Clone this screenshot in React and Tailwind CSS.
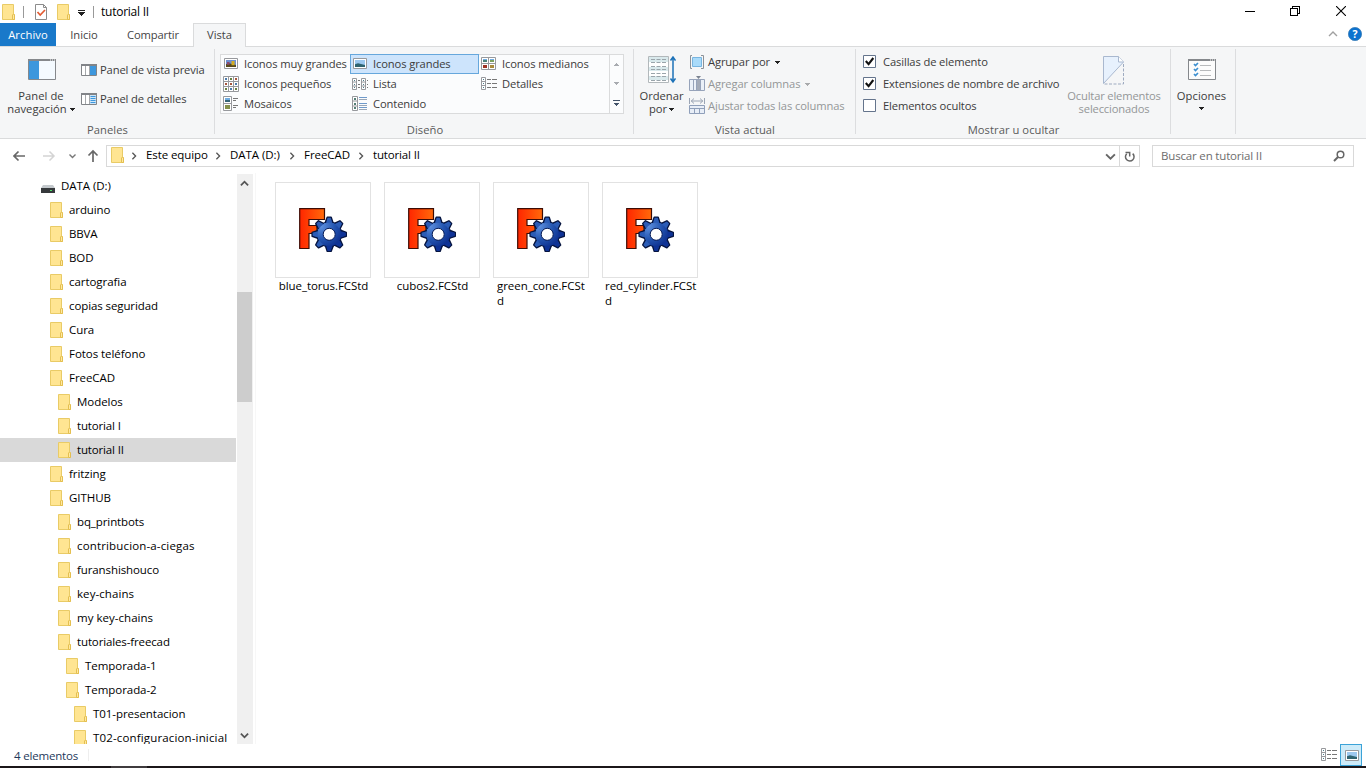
import React from "react";

function Folder({ className = "" }) {
  return (
    <svg width="14" height="16" viewBox="0 0 14 16" className={"shrink-0 " + className}>
      <path d="M.5.5h11v10h1v5H.5z" fill="#ffe592" stroke="#e9cb66" />
      <path d="M10.500 15.500v-4.500l1-1 1 1v4.500z" fill="#ffe9a2" stroke="#e4bf50" />
    </svg>
  );
}

function Caret({ color = "#222", className = "" }) {
  return (
    <svg width="5" height="3" viewBox="0 0 5 3" className={"inline-block shrink-0 " + className} shapeRendering="crispEdges">
      <path d="M0 0h5v1H4v1H3v1H2V2H1V1H0z" fill={color} />
    </svg>
  );
}

function Chevron({ dir = "right", size = 6, color = "#555", width = 1.4, className = "" }) {
  const d = {
    right: "M3 1l4 4-4 4",
    down: "M1 3l4 4 4-4",
    up: "M1 7l4-4 4 4",
  }[dir];
  return (
    <svg width={size} height={size} viewBox="0 0 10 10" className={"shrink-0 " + className}>
      <path d={d} fill="none" stroke={color} strokeWidth={(width * 10) / size} />
    </svg>
  );
}

function PaneIcon({ lines }) {
  return (
    <svg width="16" height="12" viewBox="0 0 16 12" className="-mt-px shrink-0">
      <path d="M.5.5h15v11H.5z" fill="#fff" stroke="#818488" />
      <path d="M0 0h16v2H0z" fill="#818488" />
      <path d="M4.500 2v9M8.500 2v9" stroke="#a5a8ab" />
      <path d="M9 2h6v9H9z" fill={lines ? "#cfe6f8" : "#3d97dd"} />
      {lines && <path d="M9.500 3.500h5M9.500 5.500h5M9.500 7.500h5M9.500 9.500h5" stroke="#3d97dd" />}
    </svg>
  );
}

function Photo({ x, y, w, h, colorful }) {
  return (
    <g>
      <rect x={x} y={y} width={w} height={h} fill={colorful ? "#6d8fd0" : "#9cc8ef"} />
      <path d={`M${x} ${y + h}V${y + h * 0.6}l${w * 0.3}-1 ${w * 0.7} ${h * 0.25}V${y + h}z`} fill={colorful ? "#57491b" : "#2f6470"} />
      {colorful && <rect x={x + w * 0.55} y={y + 1} width={w * 0.3} height={h * 0.6} fill="#d3ad22" />}
      {colorful && <rect x={x + w * 0.1} y={y + 2} width={w * 0.25} height={h * 0.4} fill="#8b4a6c" />}
    </g>
  );
}

function ViewIcon({ type }) {
  const g = "#97999d";
  let body = null;
  if (type === "xl" || type === "large")
    body = (
      <>
        <path d="M1.500 2.500h13v10h-13z" fill="#fff" stroke={g} />
        <Photo x={3} y={4} w={10} h={7} colorful={type === "xl"} />
      </>
    );
  if (type === "medium")
    body = (
      <>
        <path d="M.5 1.500h14v12H.5zM7.500 1.500v12M.5 7.500h14" fill="#fff" stroke={g} />
        <path d="M2 3h4v1H2zM9 3h4v1H9z" fill="#70ace0" />
        <path d="M2 4h4v2H2z" fill="#487f78" />
        <path d="M9 4h4v2H9z" fill="#7da05c" />
        <path d="M2 9h4v3H2z" fill="#9d3325" />
        <path d="M9 9h4v3H9z" fill="#a98a3c" />
      </>
    );
  if (type === "small")
    body = (
      <>
        <path d="M.5.5h15v15H.5zM5.500.5v15M10.500.5v15M.5 5.500h15M.5 10.500h15" fill="#fff" stroke={g} />
        <path d="M2 2h2v2H2zM7 12h2v2H7zM12 7h2v2h-2z" fill="#4c7bab" />
        <path d="M7 2h2v2H7zM2 12h2v2H2zM12 12h2v2h-2z" fill="#688042" />
        <path d="M12 2h2v2h-2zM2 7h2v2H2zM7 7h2v2H7z" fill="#a6553c" />
      </>
    );
  if (type === "list")
    body = (
      <>
        <path d="M.5 2.500h4v11h-4zM.5 6h4M.5 10h4M9.500 2.500h4v11h-4zM9.500 6h4M9.500 10h4" fill="#fff" stroke={g} />
        <path d="M2 4h1v1H2zM2 8h1v1H2zM2 11h1v1H2zM11 4h1v1h-1zM11 8h1v1h-1zM11 11h1v1h-1z" fill="#4e7d8c" />
        <path d="M6 4.500h2M6 8.500h2M6 11.500h2M15 4.500h1M15 8.500h1M15 11.500h1" stroke="#777" />
      </>
    );
  if (type === "details")
    body = (
      <>
        <path d="M.5 1.500h4v12h-4zM.5 5.500h4M.5 9.500h4" fill="#fff" stroke={g} />
        <path d="M2 3h1v1H2zM2 7h1v1H2zM2 11h1v1H2z" fill="#4e7d8c" />
        <path d="M6 3.500h4M11 3.500h5M6 7.500h4M11 7.500h5M6 11.500h4M11 11.500h5" stroke="#777" />
      </>
    );
  if (type === "tiles")
    body = (
      <>
        <path d="M.5.5h8v14h-8zM.5 7.500h8" fill="#fff" stroke={g} />
        <path d="M2 2h5v2H2z" fill="#70ace0" />
        <path d="M2 4h5v2H2z" fill="#376679" />
        <path d="M2 9h5v4H2z" fill="#84904a" />
        <path d="M10 2.500h5M10 4.500h3M10 9.500h5M10 11.500h3" stroke="#777" />
      </>
    );
  if (type === "content")
    body = (
      <>
        <path d="M.5.5h5v14h-5zM.5 5h5M.5 10h5" fill="#fff" stroke={g} />
        <path d="M2 2h2v2H2zM2 7h2v2H2zM2 11h2v2H2z" fill="#557f76" />
        <path d="M7 1.500h8M7 7.500h8M7 11.500h8" stroke="#6f9acb" />
        <path d="M7 3.500h8M7 9.500h8M7 13.500h8" stroke="#9ba7b6" />
      </>
    );
  return (
    <svg width="16" height="16" viewBox="0 0 16 16" className="shrink-0">
      {body}
    </svg>
  );
}

function Group({ label, className, children }) {
  return (
    <section className={"flex h-[85px] shrink-0 flex-col border-r border-[#dcdddf] " + className}>
      <div className="flex h-[73px] w-full shrink-0">{children}</div>
      <div className="-mb-[8px] shrink-0 pl-px text-center leading-[16px] tracking-[0.05px] whitespace-nowrap text-[#5a5a5a]">{label}</div>
    </section>
  );
}

function CheckRow({ checked, children }) {
  return (
    <div className="flex h-[22px] items-center">
      <svg width="13" height="13" viewBox="0 0 13 13" className="-mt-px mr-[7px] shrink-0">
        <path d="M.5.5h12v12H.5z" fill="#fff" stroke="#64748c" />
        {checked && <path d="M2.800 6l2.800 3.200L10.300 3" fill="none" stroke="#111" strokeWidth="2.100" />}
      </svg>
      <span className="whitespace-nowrap">{children}</span>
    </div>
  );
}

function FreeCad({ id }) {
  const teeth = [0, 45, 90, 135, 180, 225, 270, 315];
  return (
    <svg width="50" height="46" viewBox="0 0 50 46">
      <defs>
        <linearGradient id={"f" + id} x1="0" x2="1">
          <stop offset="0" stopColor="#ff2600" />
          <stop offset="1" stopColor="#ff6a0a" />
        </linearGradient>
        <radialGradient id={"g" + id} gradientUnits="userSpaceOnUse" cx="23" cy="19" r="27">
          <stop offset="0" stopColor="#5f91df" />
          <stop offset=".5" stopColor="#2455b0" />
          <stop offset="1" stopColor="#062384" />
        </radialGradient>
      </defs>
      <path d="M1.700 1.700H26.500V12.500H11V18.500H19V26.500H11V41.500H1.700z" fill={"url(#f" + id + ")"} stroke="#3c0c05" strokeWidth="1.200" />
      <g>
        {teeth.map((a) => (
          <path key={a} d="M27.200 16L29.300 10.300h3.800L35 16z" transform={`rotate(${a} 31.2 27.3)`} fill="#1b469f" stroke="#06143f" strokeWidth="1.600" strokeLinejoin="round" />
        ))}
        <circle cx="31.2" cy="27.3" r="12.5" fill={"url(#g" + id + ")"} stroke="#06143f" strokeWidth="1" />
        {teeth.map((a) => (
          <path key={a} d="M27.800 17L29.700 10.700h3L34.600 17z" transform={`rotate(${a} 31.2 27.3)`} fill={a > 45 && a < 225 ? "#0e3296" : "#2b5cb6"} />
        ))}
        <circle cx="31.2" cy="27.3" r="11.5" fill={"url(#g" + id + ")"} />
        <circle cx="31.2" cy="27.3" r="6" fill="#fff" stroke="#071b55" strokeWidth="1" />
      </g>
    </svg>
  );
}

const tree = [
  ["arduino", "pl-[50px]", "tracking-[-0.1px]"],
  ["BBVA", "pl-[50px]", "tracking-[-0.15px]"],
  ["BOD", "pl-[50px]", "tracking-[-0.1px]"],
  ["cartografia", "pl-[50px]", ""],
  ["copias seguridad", "pl-[50px]", "tracking-[-0.1px]"],
  ["Cura", "pl-[50px]", ""],
  ["Fotos teléfono", "pl-[50px]", ""],
  ["FreeCAD", "pl-[50px]", ""],
  ["Modelos", "pl-[58px]", ""],
  ["tutorial I", "pl-[58px]", "tracking-[-0.15px]"],
  ["tutorial II", "pl-[58px]", "tracking-[-0.15px]"],
  ["fritzing", "pl-[50px]", ""],
  ["GITHUB", "pl-[50px]", ""],
  ["bq_printbots", "pl-[58px]", "tracking-[-0.1px]"],
  ["contribucion-a-ciegas", "pl-[58px]", "tracking-[0.15px]"],
  ["furanshishouco", "pl-[58px]", "tracking-[-0.1px]"],
  ["key-chains", "pl-[58px]", "tracking-[0.07px]"],
  ["my key-chains", "pl-[58px]", "tracking-[0.03px]"],
  ["tutoriales-freecad", "pl-[58px]", "tracking-[-0.13px]"],
  ["Temporada-1", "pl-[66px]", ""],
  ["Temporada-2", "pl-[66px]", ""],
  ["T01-presentacion", "pl-[74px]", ""],
  ["T02-configuracion-inicial", "pl-[74px]", "tracking-[0.15px]"],
];

const views = [
  ["xl", "Iconos muy grandes"],
  ["large", "Iconos grandes"],
  ["medium", "Iconos medianos"],
  ["small", "Iconos pequeños"],
  ["list", "Lista"],
  ["details", "Detalles"],
  ["tiles", "Mosaicos"],
  ["content", "Contenido"],
];

const files = [
  ["blue_torus.FCStd"],
  ["cubos2.FCStd"],
  ["green_cone.FCSt", "d"],
  ["red_cylinder.FCSt", "d"],
];

function TitleBar() {
  return (
    <header className="flex h-[23px] items-center bg-white">
      <Folder className="ml-[2px]" />
      <span className="ml-[7px] h-3 w-px bg-[#999]" />
      <svg width="12" height="16" viewBox="0 0 12 16" className="ml-[11px]">
        <path d="M.5.5h8l3 3v12H.5z" fill="#fff" stroke="#8c8c8c" />
        <path d="M8.500.5v3h3" fill="none" stroke="#8c8c8c" />
        <path d="M2.500 8l2.700 3L10 6" fill="none" stroke="#e35b32" strokeWidth="1.700" />
      </svg>
      <Folder className="ml-[10px]" />
      <svg width="7" height="6" viewBox="0 0 7 6" className="mt-[3px] ml-[7px]" shapeRendering="crispEdges">
        <path d="M0 0h7v1H0zM0 2h7v1H6v1H5v1H4v1H3V5H2V4H1V3H0z" fill="#222" />
      </svg>
      <span className="ml-[8px] h-3 w-px bg-[#999]" />
      <span className="ml-[7px] text-[12px] tracking-[-0.25px] text-black">tutorial II</span>
      <div className="ml-auto flex items-center pr-[20px] pb-[2px]">
        <span className="mt-px h-px w-[10px] bg-black" />
        <svg width="10" height="10" viewBox="0 0 10 10" className="ml-[35px]" shapeRendering="crispEdges">
          <path d="M.5 2.500h7v7h-7zM2.500 2.500v-2h7v7h-2" fill="none" stroke="#000" />
        </svg>
        <svg width="10" height="10" viewBox="0 0 10 10" className="ml-[36px]">
          <path d="M0 0l10 10M10 0L0 10" stroke="#000" strokeWidth="1.100" />
        </svg>
      </div>
    </header>
  );
}

function Tabs() {
  return (
    <nav className="flex h-[24px] shrink-0 items-stretch border-b border-[#dadbdc] bg-white text-[11.2px] leading-[23px] tracking-[-0.05px] text-[#444]">
      <span className="w-[56px] bg-[#1979ca] text-center tracking-[0.1px] text-white">Archivo</span>
      <span className="w-[56px] text-center">Inicio</span>
      <span className="w-[81px] pl-px text-center tracking-[-0.15px]">Compartir</span>
      <span className="-mb-px w-[53px] border border-b-0 border-[#dadbdc] bg-[#f5f6f7] text-center leading-[22px]">Vista</span>
      <div className="ml-auto flex items-center pr-[4px]">
        <Chevron dir="up" size={10} color="#a0a0a0" width={1.4} className="-mt-px mr-[10px]" />
        <svg width="14" height="14" viewBox="0 0 14 14" className="-mt-px">
          <circle cx="7" cy="7" r="6.6" fill="#0b72cf" stroke="#3c7fb8" strokeWidth=".8" />
          <text x="7" y="10.7" textAnchor="middle" fontFamily="Open Sans, sans-serif" fontWeight="700" fontSize="10.5" fill="#fff">?</text>
        </svg>
      </div>
    </nav>
  );
}

function Ribbon() {
  return (
    <div className="flex h-[92px] shrink-0 border-b border-[#dadbdc] bg-[#f5f6f7] pt-[2px] text-[11.2px] tracking-[-0.12px] text-[#3b3b3b]">
      <Group label="Paneles" className="w-[215px]">
        <div className="flex w-[81px] flex-col items-center pt-[10px] pl-px">
          <svg width="28" height="21" viewBox="0 0 28 21" className="ml-px">
            <path d="M.5.5h27v20H.5z" fill="#f4faff" stroke="#85888c" />
            <path d="M0 0h28v2H0z" fill="#85888c" />
            <path d="M1 2h10v18H1z" fill="#3d97dd" />
            <path d="M22 1h1M24 1h1M26 1h1" stroke="#fff" />
          </svg>
          <div className="mt-[9px] text-center leading-[13px] tracking-[0.05px] whitespace-nowrap">
            Panel de<br />navegación <Caret className="mb-[2px]" />
          </div>
        </div>
        <div className="flex flex-col pt-[7px]">
          <div className="flex h-[29px] items-center gap-[3px] whitespace-nowrap"><PaneIcon />Panel de vista previa</div>
          <div className="flex h-[29px] items-center gap-[3px] whitespace-nowrap"><PaneIcon lines />Panel de detalles</div>
        </div>
      </Group>
      <Group label="Diseño" className="w-[419px] pl-[5px] pr-[4px]">
        <div className="mt-[5px] flex h-[60px] w-[404px] border border-[#dadbdc] bg-[#fbfcfd]">
          <div className="-mt-px grid h-[60px] w-[388px] grid-cols-[129px_129px_130px] grid-rows-[20px_20px_20px]">
            {views.map(([type, label]) => (
              <div
                key={type}
                className={
                  "flex items-center gap-[5px] pl-[2px] whitespace-nowrap " +
                  (type === "large" ? "border border-[#66a7dc] bg-[#cde4fc] pl-px" : "")
                }
              >
                <ViewIcon type={type} />
                {label}
              </div>
            ))}
          </div>
          <div className="flex w-[14px] flex-col items-center justify-between border-l border-[#dadbdc] pt-[8px] pb-[7px]">
            <Caret color="#a8abb0" className="rotate-180" />
            <Caret color="#a8abb0" />
            <svg width="7" height="6" viewBox="0 0 7 6" shapeRendering="crispEdges">
              <path d="M0 0h7v1H0zM1 3h5v1H5v1H4v1H3V5H2V4H1z" fill="#44546a" />
            </svg>
          </div>
        </div>
      </Group>
      <Group label="Vista actual" className="w-[222px]">
        <div className="flex w-[55px] flex-col items-center pt-[7px]">
          <svg width="28" height="28" viewBox="0 0 28 28">
            <path d="M.5.5h20v26H.5z" fill="#fff" stroke="#b2b8bb" />
            <path d="M1 1h19v5H1zM1 11h19v4H1zM1 20h19v4H1z" fill="#d9e9ec" />
            <path d="M3 3.500h16M3 6.500h16M3 10.500h16M3 13.500h16M3 17.500h16M3 20.500h16M3 24.500h16" stroke="#9aa5ab" strokeDasharray="4 1.500" />
            <path d="M25 2v23M22.500 4.500L25 1l2.500 3.500M22.500 22.500L25 26l2.500-3.500" fill="none" stroke="#1d72b8" strokeWidth="1.500" />
          </svg>
          <div className="mt-[5px] text-center leading-[13px] tracking-[-0.02px] whitespace-nowrap">
            Ordenar<br />por <Caret className="mb-[2px] -ml-px" />
          </div>
        </div>
        <div className="flex flex-col pt-[2px]">
          <div className="flex h-[22px] items-center whitespace-nowrap">
            <svg width="16" height="16" viewBox="0 0 16 16" className="mr-[3px]">
              <path d="M3 1.500H1.500v13H3M12 1.500h2.500v13H12" fill="none" stroke="#8c9298" />
              <path d="M3.500 3.500h9v9h-9z" fill="#a9dbfa" stroke="#78b5e0" />
            </svg>
            Agrupar por<Caret className="ml-[5px]" />
          </div>
          <div className="flex h-[22px] items-center whitespace-nowrap text-[#949698]">
            <svg width="16" height="16" viewBox="0 0 16 16" className="mr-[3px]">
              <path d="M.5 3.500h15v11H.5zM4.500 3v12M7.500 3v12M11.500 3v12" fill="#eaf0f8" stroke="#96a3ba" />
              <path d="M8 4h3v10H8z" fill="#a3abb9" />
              <path d="M7 0h5L9.500 3z" fill="#7b8390" />
            </svg>
            Agregar columnas<Caret color="#a8aaac" className="ml-[5px]" />
          </div>
          <div className="flex h-[22px] items-center whitespace-nowrap text-[#949698]">
            <svg width="16" height="16" viewBox="0 0 16 16" className="mr-[3px]">
              <path d="M.5 0v6M15.500 0v6M2 3h12M5 .5L2.300 3 5 5.500M11 .5L13.700 3 11 5.500" fill="none" stroke="#9aa4b4" />
              <path d="M.5 7.500h15v8H.5zM.5 10.500h15M5.500 10v6M10.500 10v6" fill="#e8eef7" stroke="#8f9fba" />
            </svg>
            Ajustar todas las columnas
          </div>
        </div>
      </Group>
      <Group label="Mostrar u ocultar" className="w-[315px]">
        <div className="flex w-[205px] flex-col pt-[2px] pl-[7px]">
          <CheckRow checked>Casillas de elemento</CheckRow>
          <CheckRow checked>Extensiones de nombre de archivo</CheckRow>
          <CheckRow>Elementos ocultos</CheckRow>
        </div>
        <div className="flex w-[106px] flex-col items-center pt-[7px] text-[#949698]">
          <svg width="22" height="29" viewBox="0 0 22 29">
            <path d="M.5 27.500V.5h15l5 5.500z" fill="#e7f1fd" stroke="#a9b8cf" />
            <path d="M15.500.5V6h5" fill="#fff" stroke="#a9b8cf" />
            <path d="M20.500 8v20H.5" fill="none" stroke="#9eabc0" strokeDasharray="3 1.500" />
          </svg>
          <div className="mt-[4px] text-center leading-[13px] tracking-[-0.17px] whitespace-nowrap">Ocultar elementos<br />seleccionados</div>
        </div>
      </Group>
      <Group label="" className="w-[65px]">
        <div className="flex w-[61px] flex-col items-center pt-[10px]">
          <svg width="28" height="21" viewBox="0 0 28 21">
            <path d="M.5.5h27v20H.5z" fill="#fcfcfc" stroke="#85888c" />
            <path d="M0 0h28v2H0z" fill="#85888c" />
            <path d="M22 1h1M24 1h1M26 1h1" stroke="#fff" />
            <path d="M6 5l1.500 1.500L10 4M6 10l1.500 1.500L10 9M6 15l1.500 1.500L10 14" fill="none" stroke="#3c8fd0" strokeWidth="1.700" />
            <path d="M12 6.500h11M12 11.500h11M12 16.500h11" stroke="#b8babc" />
          </svg>
          <div className="mt-[9px] leading-[13px] tracking-[0.05px]">Opciones</div>
          <Caret className="mt-[5px]" />
        </div>
      </Group>
    </div>
  );
}

function AddressBar() {
  const crumbs = [
    ["Este equipo", "w-[84px] tracking-[-0.1px]"],
    ["DATA (D:)", "w-[74px]"],
    ["FreeCAD", "w-[69px]"],
    ["tutorial II", "tracking-[-0.15px]"],
  ];
  return (
    <div className="flex h-[34px] shrink-0 items-center">
      <svg width="88" height="14" viewBox="0 0 88 14" className="ml-[13px]" fill="none">
        <path d="M12 7H1M5.500 2.500L1 7l4.500 4.500" stroke="#686868" strokeWidth="1.700" />
        <path d="M30 7h11M36.500 2.500L41 7l-4.500 4.500" stroke="#d4d4d4" strokeWidth="1.500" />
        <path d="M56.500 5.500l3 3 3-3" stroke="#777" strokeWidth="1.400" />
        <path d="M80 13V2M75.500 6.500L80 2l4.500 4.500" stroke="#686868" strokeWidth="1.700" />
      </svg>
      <div className="ml-[5px] flex h-[22px] w-[1034px] items-center border border-[#d9d9d9] bg-white text-black">
        <Folder className="-mt-[2px] ml-[4px]" />
        <Chevron size={8} color="#555" width={1.3} className="mr-[7px] ml-[5px]" />
        <div className="-mt-[2px] ml-px flex">
          {crumbs.map(([label, w], i) => (
            <span key={label} className={"flex items-center justify-between whitespace-nowrap " + w}>
              {label}
              {i < 3 && <Chevron size={8} color="#555" width={1.3} className="mt-[2px] mr-[8px]" />}
            </span>
          ))}
        </div>
        <span className="ml-auto flex h-full items-center border-r border-[#d9d9d9] pr-[3px]">
          <Chevron dir="down" size={11} color="#666" width={1.9} className="mt-px" />
        </span>
        <svg width="19" height="20" viewBox="0 0 19 20" fill="none" stroke="#666" strokeWidth="1.500">
          <path d="M6.700 7.700A4.300 4.300 0 1 0 12.700 7.600" />
          <path d="M5.500 6.500H9.700V10.500" />
        </svg>
      </div>
      <div className="ml-[12px] flex h-[22px] w-[202px] items-center justify-between border border-[#d9d9d9] bg-white pr-[8px] pl-[8px] text-[#6d6d6d]">
        <span className="-mt-px tracking-[-0.17px]">Buscar en tutorial II</span>
        <svg width="12" height="12" viewBox="0 0 12 12">
          <circle cx="7.500" cy="4.500" r="3.300" fill="none" stroke="#666" strokeWidth="1.500" />
          <path d="M5 7L1 11" stroke="#666" strokeWidth="1.900" />
        </svg>
      </div>
    </div>
  );
}

export default function App() {
  return (
    <div className="flex h-[768px] w-[1366px] flex-col overflow-hidden bg-white font-['Open_Sans','Noto_Sans',sans-serif] text-[11.5px] tracking-[-0.05px] text-black">
      <TitleBar />
      <Tabs />
      <Ribbon />
      <AddressBar />
      <main className="flex h-[571px] shrink-0">
        <aside className="h-full w-[237px] overflow-hidden pt-px pr-px">
          <div className="flex h-6 items-center pl-[41px]">
            <svg width="14" height="8" viewBox="0 0 14 8" className="mt-[5px] mr-[6px]">
              <path d="M2 0h10l2 3H0z" fill="#c4c9cd" />
              <path d="M0 3h14v5H0z" fill="#36393c" />
              <path d="M9 5h2v1H9z" fill="#4ee06a" />
            </svg>
            DATA (D:)
          </div>
          {tree.map(([name, pad, track]) => (
            <div key={name} className={"flex h-6 items-center gap-[5px] whitespace-nowrap " + pad + " " + track + (name === "tutorial II" ? " bg-[#d9d9d9]" : "")}>
              <Folder />
              {name}
            </div>
          ))}
        </aside>
        <div className="mt-px flex w-[16px] flex-col items-start bg-[#f0f0f0]">
          <Chevron dir="up" size={9} color="#555" width={1.8} className="mt-[5px] ml-[3px]" />
          <div className="mt-[104px] h-[110px] w-[15px] bg-[#cdcdcd]" />
          <Chevron dir="down" size={9} color="#555" width={1.8} className="mt-auto mb-[4px] ml-[3px]" />
        </div>
        <div className="ml-[2px] w-px bg-[#f7f7f7]" />
        <div className="ml-[19px] flex gap-[13px] pt-[9px]">
          {files.map((lines, i) => (
            <div key={i} className="w-24">
              <div className="flex h-24 items-center justify-center border border-[#e2e2e2] bg-white">
                <FreeCad id={i} />
              </div>
              <div className={"leading-[15px] whitespace-nowrap " + (lines.length > 1 ? (i === 3 ? "pl-[3px]" : "pl-[4px]") : "pl-px text-center")}>
                {lines.map((l) => (
                  <div key={l}>{l}</div>
                ))}
              </div>
            </div>
          ))}
        </div>
      </main>
      <footer className="flex h-[22px] shrink-0 items-center pl-[14px] text-[#1e395b]">
        <span className="mt-px w-[74px] tracking-[-0.18px]">4 elementos</span>
        <span className="h-3 w-px bg-[#eee]" />
        <span className="ml-auto"><ViewIcon type="details" /></span>
        <span className="ml-[3px] flex h-[22px] w-[22px] shrink-0 items-center justify-center border border-[#3ba3d8] bg-[#cdebf9] pt-px pl-px">
          <ViewIcon type="large" />
        </span>
        <span className="w-[4px]" />
      </footer>
      <div className="flex h-[2px] shrink-0 bg-[#1b1619]">
        <span className="ml-[111px] w-[36px] bg-[#3f3b3d]" />
      </div>
    </div>
  );
}
